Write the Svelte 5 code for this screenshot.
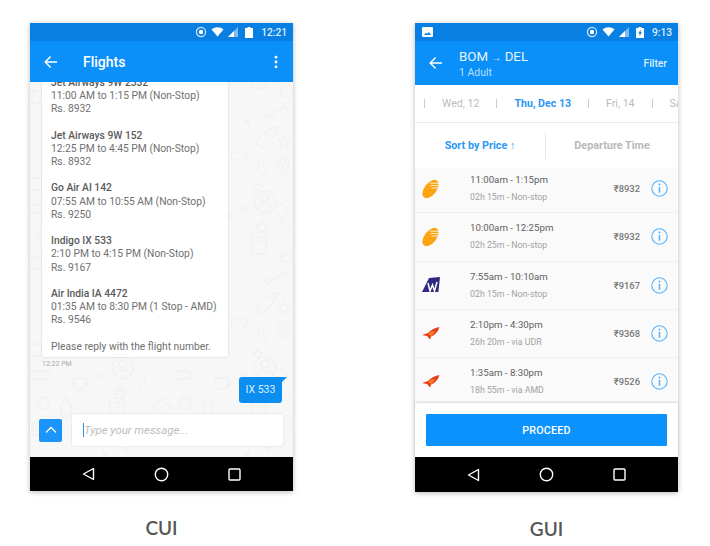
<script>
  const messages = [
    { name: 'Jet Airways 9W 2332', time: '11:00 AM to 1:15 PM (Non-Stop)', price: 'Rs. 8932' },
    { name: 'Jet Airways 9W 152', time: '12:25 PM to 4:45 PM (Non-Stop)', price: 'Rs. 8932' },
    { name: 'Go Air AI 142', time: '07:55 AM to 10:55 AM (Non-Stop)', price: 'Rs. 9250' },
    { name: 'Indigo IX 533', time: '2:10 PM to 4:15 PM (Non-Stop)', price: 'Rs. 9167' },
    { name: 'Air India IA 4472', time: '01:35 AM to 8:30 PM (1 Stop - AMD)', price: 'Rs. 9546' }
  ];

  const flights = [
    { logo: 'jet', time: '11:00am - 1:15pm', sub: '02h 15m - Non-stop', price: '₹8932' },
    { logo: 'jet', time: '10:00am - 12:25pm', sub: '02h 25m - Non-stop', price: '₹8932' },
    { logo: 'goair', time: '7:55am - 10:10am', sub: '02h 15m - Non-stop', price: '₹9167' },
    { logo: 'airindia', time: '2:10pm - 4:30pm', sub: '26h 20m - via UDR', price: '₹9368' },
    { logo: 'airindia', time: '1:35am - 8:30pm', sub: '18h 55m - via AMD', price: '₹9526' }
  ];
</script>

{#snippet statusIcons()}
  <svg class="st-target" width="12" height="12" viewBox="0 0 12 12">
    <circle cx="6" cy="6" r="4.6" fill="none" stroke="#cfe6fb" stroke-width="1.2" />
    <circle cx="6" cy="6" r="2.2" fill="#fff" />
  </svg>
  <svg class="st-wifi" width="13" height="10" viewBox="0 0 13 10">
    <path d="M0.5 2.6 C4 -0.4 9 -0.4 12.5 2.6 L6.5 9.6 Z" fill="#fff" />
  </svg>
  <svg class="st-signal" width="10" height="10" viewBox="0 0 10 10">
    <path d="M0 10 L10 0 V10 Z" fill="#7dbdf3" />
    <path d="M0 10 L6 4 V10 Z" fill="#fff" />
  </svg>
{/snippet}

{#snippet navBar()}
  <div class="nav">
    <svg width="13" height="14" viewBox="0 0 13 14">
      <path d="M11.5 1.5 V12.5 L1.5 7 Z" fill="none" stroke="#fff" stroke-width="1.4" stroke-linejoin="round" />
    </svg>
    <svg width="15" height="15" viewBox="0 0 15 15">
      <circle cx="7.5" cy="7.5" r="6.2" fill="none" stroke="#fff" stroke-width="1.4" />
    </svg>
    <svg width="13" height="13" viewBox="0 0 13 13">
      <rect x="1" y="1" width="11" height="11" rx="1" fill="none" stroke="#fff" stroke-width="1.4" />
    </svg>
  </div>
{/snippet}

<div class="page">
  <section class="col">
    <div class="phone">
      <div class="status">
        {@render statusIcons()}
        <svg class="st-batt" width="8" height="11" viewBox="0 0 8 11">
          <path d="M2.5 0 H5.5 V1 H8 V11 H0 V1 H2.5 Z" fill="#fff" />
        </svg>
        <span class="clock">12:21</span>
      </div>
      <header class="appbar">
        <svg class="back" width="14" height="14" viewBox="0 0 14 14">
          <path d="M13 7 H1.5 M6.6 1.6 L1.2 7 L6.6 12.4" fill="none" stroke="#fff" stroke-width="1.4" />
        </svg>
        <span class="title">Flights</span>
        <svg class="more" width="4" height="14" viewBox="0 0 4 14">
          <circle cx="2" cy="2.2" r="1.4" fill="#fff" />
          <circle cx="2" cy="7" r="1.4" fill="#fff" />
          <circle cx="2" cy="11.8" r="1.4" fill="#fff" />
        </svg>
      </header>

      <div class="chat">
        <svg class="doodles" width="263" height="375">
          <defs>
            <pattern id="doodle" width="142" height="166" patternUnits="userSpaceOnUse">
              <g fill="none" stroke="#eeeeee" stroke-width="1">
                <circle cx="93" cy="120" r="11" />
                <circle cx="93" cy="116" r="4" />
                <path d="M85 127 C87 121 99 121 101 127" />
                <path d="M43 130 H56 V137 C56 143 43 143 43 137 Z M56 132 C61 131 61 137 56 137" />
                <circle cx="72" cy="127" r="2.5" />
                <rect x="0" y="123" width="20" height="8" rx="4" />
                <path d="M10 149 H16 V152 H19 V158 H16 V161 H10 V158 H7 V152 H10 Z" />
                <path d="M34 150 H38 V153 L41 157 V168 H31 V157 L34 153 Z" />
                <path d="M34 -16 H38 V-13 L41 -9 V2 H31 V-9 L34 -13 Z" />
                <path d="M88 140 H92 V143 H95 V147 H92 V150 H88 V147 H85 V143 H88 Z" />
                <path d="M108 122 C118 124 116 134 110 136 C106 138 112 146 118 146" />
                <path d="M128 156 L132 150 L136 156 L142 158 L136 162 L132 166 L128 162 L122 158 Z" />
                <rect x="80" y="150" width="14" height="22" rx="1" />
                <rect x="80" y="-16" width="14" height="22" rx="1" />
                <path d="M84 155 H90 M84 159 H90" />
                <path d="M84 -11 H90 M84 -7 H90" />
                <path d="M109 14 V6 C109 3 114 3 114 6 L118 3 C120 2 122 5 120 7 V14 Z" />
                <path d="M94 35 L114 25 M92 31 L98 39 M110 21 L117 29 M95 28 L101 36" />
                <path d="M84 62 C90 50 100 46 106 44 C104 52 98 60 90 66 Z M84 68 L80 72" />
                <path d="M112 54 L114 58 L118 58 L115 61 L116 65 L112 63 L108 65 L109 61 L106 58 L110 58 Z" />
                <path d="M67 84 L60 76 C57 71 63 67 67 72 C71 67 77 71 74 76 Z" />
                <path d="M92 74 C84 76 84 90 92 94 C96 94 94 86 90 84" />
                <path d="M111 92 C104 82 103 76 111 74 C119 76 118 82 111 92 Z" />
                <circle cx="111" cy="80" r="3" />
                <path d="M86 101 L88 104 L91 105 L88 107 L86 110 L84 107 L81 105 L84 104 Z" />
                <circle cx="75" cy="40" r="2" />
                <rect x="2" y="9" width="14" height="12" />
                <path d="M2 9 L9 15 L16 9" />
                <rect x="-6" y="96" width="18" height="12" rx="2" />
              </g>
            </pattern>
          </defs>
          <rect width="263" height="375" fill="url(#doodle)" />
        </svg>

        <div class="card">
          {#each messages as m}
            <div class="msg">
              <p class="name">{m.name}</p>
              <p>{m.time}</p>
              <p>{m.price}</p>
            </div>
          {/each}
          <p>Please reply with the flight number.</p>
        </div>
        <span class="stamp">12:22 PM</span>
        <div class="bubble">IX 533</div>
        <div class="composer">
          <button class="up" aria-label="Expand">
            <svg width="12" height="8" viewBox="0 0 12 8">
              <path d="M1 6.5 L6 1.5 L11 6.5" fill="none" stroke="#fff" stroke-width="1.3" />
            </svg>
          </button>
          <div class="input"><i class="caret"></i><span>Type your message...</span></div>
        </div>
      </div>
      {@render navBar()}
    </div>
    <h2>CUI</h2>
  </section>

  <section class="col">
    <div class="phone tall">
      <div class="status">
        <svg class="st-image" width="11" height="10" viewBox="0 0 11 10">
          <path fill-rule="evenodd" d="M1 0 H10 A1 1 0 0 1 11 1 V9 A1 1 0 0 1 10 10 H1 A1 1 0 0 1 0 9 V1 A1 1 0 0 1 1 0 Z M2 8 H9 L6.8 5 L5.2 7 L4 5.8 Z" fill="#fff" />
        </svg>
        <span class="grow"></span>
        {@render statusIcons()}
        <svg class="st-batt" width="8" height="11" viewBox="0 0 8 11">
          <path fill-rule="evenodd" d="M2.5 0 H5.5 V1 H8 V11 H0 V1 H2.5 Z M4.6 2.8 L2.2 6.5 H3.6 V9 L6 5.3 H4.6 Z" fill="#fff" />
        </svg>
        <span class="clock">9:13</span>
      </div>
      <header class="appbar route">
        <svg class="back" width="14" height="14" viewBox="0 0 14 14">
          <path d="M13 7 H1.5 M6.6 1.6 L1.2 7 L6.6 12.4" fill="none" stroke="#fff" stroke-width="1.4" />
        </svg>
        <div class="trip">
          <div class="cities">BOM <span class="arrow">→</span> DEL</div>
          <div class="pax">1 Adult</div>
        </div>
        <span class="filter">Filter</span>
      </header>

      <div class="dates">
        <i></i><span>Wed, 12</span>
        <i></i><span class="on">Thu, Dec 13</span>
        <i></i><span>Fri, 14</span>
        <i></i><span>Sat, 15</span>
      </div>

      <div class="sort">
        <span class="on">Sort by Price ↑</span>
        <span>Departure Time</span>
      </div>

      <div class="list">
        {#each flights as f}
          <div class="row">
            <div class="logo">
              {#if f.logo === 'jet'}
                <svg width="18" height="20" viewBox="0 0 18 20">
                  <ellipse cx="8.5" cy="10" rx="6" ry="10.6" transform="rotate(38 8.5 10)" fill="#fca311" />
                  <path d="M8 4.2 H18 M8.5 6.6 H18 M9.5 9 H16" stroke="#fff" stroke-width="0.8" />
                </svg>
              {:else if f.logo === 'goair'}
                <svg width="18" height="16" viewBox="0 0 18 16">
                  <path d="M7 1 L18 0 L16.4 15 L0 15 Z" fill="#2f2a80" />
                  <path d="M6 6 L8 14 L10.5 8 L12.5 14 L15 5" fill="none" stroke="#fff" stroke-width="1.5" />
                </svg>
              {:else}
                <svg width="18" height="13" viewBox="0 0 18 13">
                  <path d="M17.5 0 C12 1 8 3.5 6 6 L0 8 L5 9 L8 12.5 L9 9.6 C13 8 16 5 17.5 0 Z" fill="#ea3a1e" />
                  <path d="M6 7 C8 4.6 11 4 13 4 C12 6 10.5 8 9 9 Z" fill="#f7851d" />
                </svg>
              {/if}
            </div>
            <div class="info">
              <div class="time">{f.time}</div>
              <div class="sub">{f.sub}</div>
            </div>
            <span class="price">{f.price}</span>
            <svg class="i" width="17" height="17" viewBox="0 0 17 17">
              <circle cx="8.5" cy="8.5" r="7.7" fill="none" stroke="#58b2fb" stroke-width="1.1" />
              <circle cx="8.5" cy="4.6" r="1" fill="#58b2fb" />
              <path d="M8.5 7 V12.8" stroke="#58b2fb" stroke-width="1.5" />
            </svg>
          </div>
        {/each}
      </div>

      <div class="footer">
        <button class="proceed">PROCEED</button>
      </div>
      {@render navBar()}
    </div>
    <h2>GUI</h2>
  </section>
</div>

<style>
  :global(body) {
    background: #fff;
    font-family: Roboto, "Liberation Sans", sans-serif;
  }

  p, h2 {
    margin: 0;
  }

  .page {
    display: flex;
    gap: 122px;
    width: 710px;
    height: 546px;
    padding: 23px 0 0 30px;
    box-sizing: border-box;
    overflow: hidden;
  }

  .col {
    width: 263px;
  }

  h2 {
    margin-top: 26px;
    text-align: center;
    font: 600 19px/22px Lato, sans-serif;
    color: #555;
  }

  .tall h2 {
    margin-top: 25px;
  }

  .phone {
    display: flex;
    flex-direction: column;
    height: 468px;
    box-shadow: 0 1px 5px rgba(0, 0, 0, 0.28);
  }

  .phone.tall {
    height: 469px;
  }

  .status {
    display: flex;
    align-items: center;
    justify-content: flex-end;
    flex: none;
    height: 18px;
    padding: 0 6px 0 7px;
    background: #087fe3;
  }

  .grow {
    flex: 1;
  }

  .st-target {
    margin-right: 4px;
  }

  .st-wifi {
    margin-right: 4px;
  }

  .st-signal {
    margin-right: 7px;
  }

  .st-batt {
    margin-right: 8px;
  }

  .clock {
    font-size: 10.2px;
    font-weight: 500;
    color: #dceefd;
  }

  .appbar {
    display: flex;
    align-items: center;
    flex: none;
    height: 41px;
    padding: 0 15px 0 14px;
    background: #0b8ff8;
    color: #fff;
  }

  .title {
    margin-left: 25px;
    font-size: 14px;
    font-weight: 500;
  }

  .more {
    margin-left: auto;
  }

  .chat {
    position: relative;
    display: flex;
    flex-direction: column;
    justify-content: flex-end;
    flex: 1;
    min-height: 0;
    overflow: hidden;
    background: #f7f7f7;
  }

  .doodles {
    position: absolute;
    left: 0;
    top: 0;
  }

  .card, .stamp, .bubble, .composer {
    position: relative;
    flex: none;
  }

  .card {
    width: 186px;
    margin-left: 12px;
    padding: 0 9px 4px;
    box-sizing: border-box;
    background: #fff;
    border-radius: 0 0 3px 3px;
    box-shadow: 0 0 2px rgba(0, 0, 0, 0.2);
    font-size: 10.3px;
    line-height: 13.2px;
    color: #707070;
    white-space: nowrap;
  }

  .msg {
    margin-bottom: 13.2px;
  }

  .name {
    font-weight: 500;
    color: #5a5a5a;
  }

  .stamp {
    margin: 2px 0 0 12px;
    font-size: 7px;
    line-height: 10px;
    color: #aaa;
  }

  .bubble {
    align-self: flex-end;
    width: 43px;
    height: 26px;
    margin: 8px 11px 0 0;
    background: #0b8ef0;
    border-radius: 3px 0 3px 3px;
    font-size: 10.5px;
    line-height: 26px;
    text-align: center;
    color: #d9edfd;
  }

  .bubble::after {
    content: "";
    position: absolute;
    left: 100%;
    top: 0;
    border-top: 5px solid #0b8ef0;
    border-right: 5px solid transparent;
  }

  .composer {
    display: flex;
    align-items: center;
    gap: 9px;
    margin: 10px 9px 10px 9px;
  }

  .up {
    display: flex;
    align-items: center;
    justify-content: center;
    width: 23px;
    height: 23px;
    padding: 0;
    border: none;
    border-radius: 2px;
    background: #1b95fb;
  }

  .input {
    display: flex;
    align-items: center;
    flex: 1;
    height: 34px;
    padding-left: 11px;
    box-sizing: border-box;
    background: #fff;
    border: 1px solid #ececec;
    border-radius: 3px;
    font-size: 11.4px;
    font-style: italic;
    color: #bdbdbd;
  }

  .caret {
    width: 1px;
    height: 14px;
    background: #2a8fe8;
  }

  .nav {
    display: flex;
    align-items: center;
    justify-content: space-between;
    flex: none;
    height: 34px;
    padding: 0 52px 0 52px;
    background: #000;
  }

  .tall .nav {
    height: 35px;
  }

  .route {
    height: 44px;
    padding-right: 11px;
  }

  .trip {
    margin-left: 16px;
    padding-top: 2px;
    color: #fff;
  }

  .cities {
    font-size: 13.3px;
    line-height: 16px;
    color: #e8f4fe;
  }

  .arrow {
    font-size: 10px;
    font-weight: 700;
  }

  .pax {
    font-size: 10.5px;
    line-height: 14px;
    color: #bcdffb;
  }

  .filter {
    margin-left: auto;
    font-size: 10.3px;
    font-weight: 500;
    color: #dceefd;
  }

  .dates {
    display: flex;
    align-items: center;
    gap: 17px;
    flex: none;
    height: 37px;
    padding-left: 9px;
    overflow: hidden;
    background: #fff;
    border-bottom: 1px solid #eaeaea;
    font-size: 10.6px;
    color: #bbb;
    white-space: nowrap;
  }

  .dates i {
    flex: none;
    width: 1px;
    height: 9px;
    background: #ccc;
  }

  .dates .on {
    font-weight: 700;
    color: #2b97f6;
  }

  .sort {
    display: flex;
    align-items: center;
    flex: none;
    height: 45px;
    background: #fff;
    font-size: 10.8px;
    font-weight: 700;
    color: #b8b8b8;
  }

  .sort span {
    flex: 1;
    height: 26px;
    line-height: 26px;
    text-align: center;
  }

  .sort span:first-child {
    flex: none;
    width: 130px;
    border-right: 1px solid #e6e6e6;
  }

  .sort .on {
    color: #2b97f6;
  }

  .list {
    flex: 1;
    min-height: 0;
    overflow: hidden;
    background: #fafafa;
  }

  .row {
    display: flex;
    align-items: center;
    height: 48.25px;
    padding: 0 10px 0 7px;
    box-sizing: border-box;
    border-bottom: 1px solid #f0f0f0;
  }

  .row:first-child {
    margin-top: -3px;
  }

  .logo {
    display: flex;
    align-items: center;
    width: 48px;
    flex: none;
  }

  .info {
    flex: 1;
  }

  .time {
    font-size: 9.7px;
    line-height: 14px;
    color: #5f5f5f;
  }

  .sub {
    margin-top: 4px;
    font-size: 8.8px;
    line-height: 13px;
    color: #a2a2a2;
  }

  .price {
    margin-right: 11px;
    font-size: 9.4px;
    font-weight: 500;
    color: #777;
  }

  .i {
    flex: none;
  }

  .footer {
    position: relative;
    display: flex;
    align-items: center;
    flex: none;
    height: 54px;
    padding: 0 11px;
    background: #fff;
    box-shadow: 0 -1px 2px rgba(0, 0, 0, 0.15);
  }

  .proceed {
    width: 100%;
    height: 32px;
    padding: 0;
    border: none;
    border-radius: 1px;
    background: #0c92fc;
    font: 500 10.7px Roboto, sans-serif;
    letter-spacing: 0.2px;
    color: #fff;
  }
</style>
